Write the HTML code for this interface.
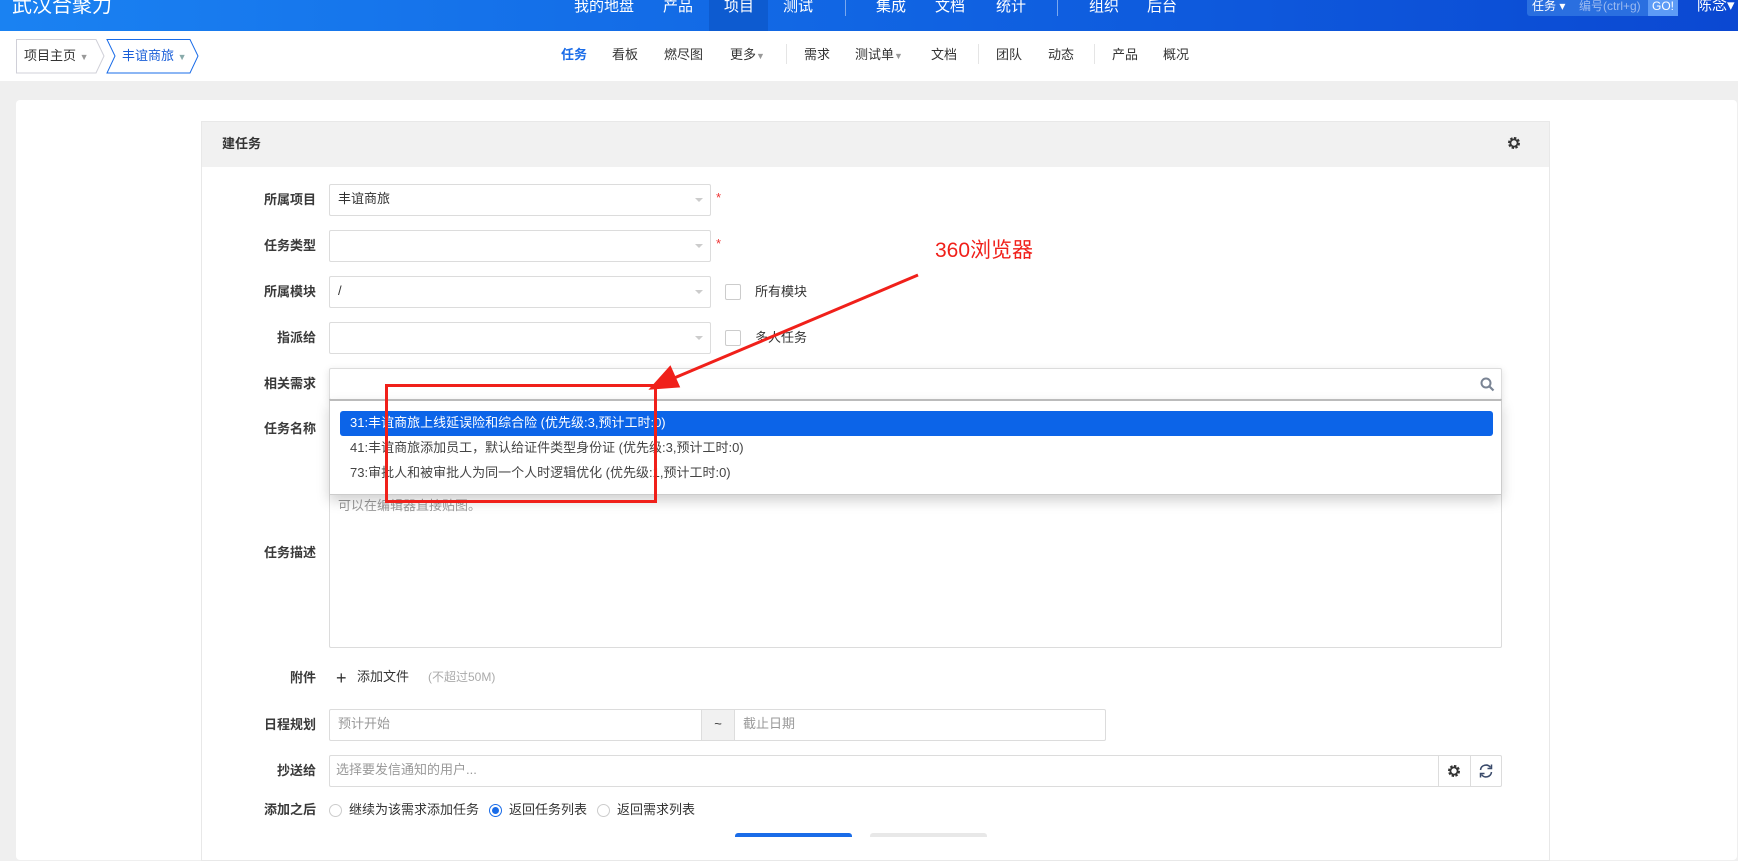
<!DOCTYPE html>
<html><head><meta charset="utf-8">
<style>
*{margin:0;padding:0;box-sizing:border-box}
body{width:1738px;height:835px;overflow:hidden;background:#efefef;font-family:"Liberation Sans","Noto Sans CJK SC",sans-serif;font-size:13px;color:#333;position:relative}
.a{position:absolute;white-space:nowrap;line-height:18px}
#hd{position:absolute;left:0;top:0;width:1738px;height:31px;background:linear-gradient(90deg,#1a82f2,#0f5fe0 60%,#0b48d2)}
#hd .n{position:absolute;top:-3px;color:#fff;font-size:15px;line-height:20px}
#sub{position:absolute;left:0;top:31px;width:1738px;height:50px;background:#fff}
.sn{position:absolute;top:15px;font-size:13px;color:#333;line-height:18px}
.sep{position:absolute;top:13px;width:1px;height:20px;background:#e5e5e5}
.lbl{position:absolute;right:1422px;font-size:13px;font-weight:bold;color:#3a3a3a;line-height:18px;text-align:right}
.inp{position:absolute;background:#fff;border:1px solid #dcdcdc;border-radius:2px}
.inp>.a{top:5px}
.car{position:absolute;right:7px;top:13px;border:4px solid transparent;border-top-color:#ccc;border-bottom:0}
.star{position:absolute;color:#e33;font-size:13px}
.cb{position:absolute;width:16px;height:16px;border:1px solid #ccc;border-radius:2px;background:#fff}
.rd{position:absolute;width:13px;height:13px;border:1px solid #ccc;border-radius:50%;background:#fff}
</style></head><body>
<div id="hd">
 <div class="n" style="left:12px;top:-6px;font-size:20px;line-height:24px">武汉合聚力</div>
 <div class="n" style="left:574px">我的地盘</div>
 <div class="n" style="left:663px">产品</div>
 <div style="position:absolute;left:709px;top:0;width:59px;height:31px;background:#0d5bd0"></div>
 <div class="n" style="left:724px">项目</div>
 <div class="n" style="left:783px">测试</div>
 <div style="position:absolute;left:845px;top:0;width:1px;height:16px;background:#7aa8ee"></div>
 <div class="n" style="left:876px">集成</div>
 <div class="n" style="left:935px">文档</div>
 <div class="n" style="left:996px">统计</div>
 <div style="position:absolute;left:1057px;top:0;width:1px;height:16px;background:#7aa8ee"></div>
 <div class="n" style="left:1089px">组织</div>
 <div class="n" style="left:1147px">后台</div>
 <div style="position:absolute;left:1527px;top:0;width:151px;height:16px;background:#2a6fe0;border-radius:0 0 3px 3px"></div>
 <div style="position:absolute;left:1648px;top:0;width:30px;height:16px;background:#5d9bf6"></div>
 <div class="n" style="left:1532px;font-size:12px;top:-4px">任务 ▾</div>
 <div class="n" style="left:1579px;font-size:12px;top:-4px;color:#9bbaf0">编号(ctrl+g)</div>
 <div class="n" style="left:1652px;font-size:12px;top:-4px">GO!</div>
 <div class="n" style="left:1697px;top:-4px">陈念▾</div>
</div>
<div id="sub">
 <svg style="position:absolute;left:16px;top:8px" width="190" height="35">
  <path d="M0.5 0.5 H80 L88 17 L80 34 H0.5Z" fill="#fff" stroke="#d0d0d8"/>
  <path d="M91 0.5 H174 L182 17 L174 34 H91 L99 17Z" fill="#fff" stroke="#1a6ce8"/>
 </svg>
 <div class="a" style="left:24px;top:16px;font-size:13px">项目主页 <span style="color:#999;font-size:9px">▼</span></div>
 <div class="a" style="left:122px;top:16px;font-size:13px;color:#1a5fd8">丰谊商旅 <span style="color:#8aa;font-size:9px">▼</span></div>
 <div class="sn" style="left:561px;color:#1a6ce8;font-weight:bold">任务</div>
 <div class="sn" style="left:612px">看板</div>
 <div class="sn" style="left:664px">燃尽图</div>
 <div class="sn" style="left:730px">更多<span style="color:#999;font-size:9px">▼</span></div>
 <div class="sep" style="left:786px"></div>
 <div class="sn" style="left:804px">需求</div>
 <div class="sn" style="left:855px">测试单<span style="color:#999;font-size:9px">▼</span></div>
 <div class="sn" style="left:931px">文档</div>
 <div class="sep" style="left:978px"></div>
 <div class="sn" style="left:996px">团队</div>
 <div class="sn" style="left:1048px">动态</div>
 <div class="sep" style="left:1094px"></div>
 <div class="sn" style="left:1112px">产品</div>
 <div class="sn" style="left:1163px">概况</div>
</div>
<div style="position:absolute;left:16px;top:100px;width:1721px;height:760px;background:#fff;border-radius:4px"></div>
<div style="position:absolute;left:201px;top:121px;width:1349px;height:740px;border:1px solid #e8e8e8;background:#fff"></div>
<div style="position:absolute;left:202px;top:122px;width:1347px;height:45px;background:#f1f1f1"></div>
<div class="a" style="left:222px;top:135px;font-weight:bold;font-size:13px">建任务</div>
<svg style="position:absolute;left:1507px;top:136px" width="14" height="14" viewBox="0 0 14 14"><circle cx="7" cy="7" r="4.5" fill="none" stroke="#333" stroke-width="3" stroke-dasharray="2.2 1.3"/><circle cx="7" cy="7" r="3.6" fill="none" stroke="#333" stroke-width="1.8"/></svg>

<div class="lbl" style="top:191px">所属项目</div>
<div class="inp" style="left:329px;top:184px;width:382px;height:32px"><span class="a" style="left:8px">丰谊商旅</span><div class="car"></div></div>
<div class="star" style="left:716px;top:190px">*</div>
<div class="lbl" style="top:237px">任务类型</div>
<div class="inp" style="left:329px;top:230px;width:382px;height:32px"><div class="car"></div></div>
<div class="star" style="left:716px;top:236px">*</div>
<div class="lbl" style="top:283px">所属模块</div>
<div class="inp" style="left:329px;top:276px;width:382px;height:32px"><span class="a" style="left:8px">/</span><div class="car"></div></div>
<div class="cb" style="left:725px;top:284px"></div><div class="a" style="left:755px;top:283px">所有模块</div>
<div class="lbl" style="top:329px">指派给</div>
<div class="inp" style="left:329px;top:322px;width:382px;height:32px"><div class="car"></div></div>
<div class="cb" style="left:725px;top:330px"></div><div class="a" style="left:755px;top:329px">多人任务</div>
<div class="lbl" style="top:375px">相关需求</div>
<div class="lbl" style="top:420px">任务名称</div>
<div class="lbl" style="top:544px">任务描述</div>
<div class="inp" style="left:329px;top:488px;width:1173px;height:160px"><span class="a" style="left:8px;top:8px;color:#999">可以在编辑器直接贴图。</span></div>
<div class="inp" style="left:329px;top:368px;width:1173px;height:32px;box-shadow:0 2px 8px rgba(0,0,0,.12)">
 <svg style="position:absolute;right:6px;top:8px" width="15" height="15" viewBox="0 0 15 15"><circle cx="6" cy="6" r="4.5" fill="none" stroke="#7a8494" stroke-width="2"/><path d="M9.5 9.5 L13.5 13.5" stroke="#7a8494" stroke-width="2.2"/></svg>
</div>
<div style="position:absolute;left:329px;top:399px;width:1173px;height:96px;background:#fff;border:1px solid #ccc;border-top:2px solid #bbb;box-shadow:0 6px 12px rgba(0,0,0,.18)">
 <div style="position:absolute;left:10px;top:10px;width:1153px;height:25px;background:#0c64e8;border-radius:3px"></div>
 <div class="a" style="left:20px;top:13px;color:#fff">31:丰谊商旅上线延误险和综合险 (优先级:3,预计工时:0)</div>
 <div class="a" style="left:20px;top:38px;color:#444">41:丰谊商旅添加员工，默认给证件类型身份证 (优先级:3,预计工时:0)</div>
 <div class="a" style="left:20px;top:63px;color:#444">73:审批人和被审批人为同一个人时逻辑优化 (优先级:1,预计工时:0)</div>
</div>
<div style="position:absolute;left:385px;top:384px;width:272px;height:119px;border:3px solid #f0201a"></div>
<svg style="position:absolute;left:0;top:0" width="1738" height="835"><path d="M918 275 L660 384" stroke="#f0201a" stroke-width="3"/><path d="M652 388 L670 368 L678 386Z" fill="#f0201a" stroke="#f0201a" stroke-width="3"/></svg>
<div class="a" style="left:935px;top:239px;color:#f0201a;font-size:21px;line-height:24px">360浏览器</div>

<div class="lbl" style="top:669px">附件</div>
<div class="a" style="left:336px;top:667px;font-size:18px;color:#333;line-height:22px">+</div>
<div class="a" style="left:357px;top:668px">添加文件</div>
<div class="a" style="left:428px;top:668px;color:#aaa;font-size:12px">(不超过50M)</div>
<div class="lbl" style="top:716px">日程规划</div>
<div class="inp" style="left:329px;top:709px;width:777px;height:32px"><span class="a" style="left:8px;color:#999">预计开始</span>
 <div style="position:absolute;left:371px;top:0;width:34px;height:30px;background:#f1f1f1;border-left:1px solid #ddd;border-right:1px solid #ddd;text-align:center;line-height:28px">~</div>
 <span class="a" style="left:413px;color:#999">截止日期</span></div>
<div class="lbl" style="top:762px">抄送给</div>
<div class="inp" style="left:329px;top:755px;width:1173px;height:32px"><span class="a" style="left:6px;color:#999">选择要发信通知的用户...</span>
 <div style="position:absolute;left:1108px;top:0;width:1px;height:30px;background:#ddd"></div>
 <div style="position:absolute;left:1140px;top:0;width:1px;height:30px;background:#ddd"></div>
 <svg style="position:absolute;left:1117px;top:8px" width="14" height="14" viewBox="0 0 14 14"><circle cx="7" cy="7" r="4.5" fill="none" stroke="#333" stroke-width="3" stroke-dasharray="2.2 1.3"/><circle cx="7" cy="7" r="3.6" fill="none" stroke="#333" stroke-width="1.8"/></svg>
 <svg style="position:absolute;left:1148px;top:7px" width="16" height="16" viewBox="0 0 16 16"><path d="M2.5 7 A5.5 5.5 0 0 1 12.5 4.5" fill="none" stroke="#3a4a6a" stroke-width="1.5"/><path d="M13.5 1.5 V5.5 H9.5" fill="none" stroke="#3a4a6a" stroke-width="1.5"/><path d="M13.5 9 A5.5 5.5 0 0 1 3.5 11.5" fill="none" stroke="#3a4a6a" stroke-width="1.5"/><path d="M2.5 14.5 V10.5 H6.5" fill="none" stroke="#3a4a6a" stroke-width="1.5"/></svg>
</div>
<div class="lbl" style="top:801px">添加之后</div>
<div class="rd" style="left:329px;top:804px"></div><div class="a" style="left:349px;top:801px;color:#333">继续为该需求添加任务</div>
<div class="rd" style="left:489px;top:804px;border-color:#1a6ce8"><div style="position:absolute;left:2px;top:2px;width:7px;height:7px;border-radius:50%;background:#1a6ce8"></div></div><div class="a" style="left:509px;top:801px">返回任务列表</div>
<div class="rd" style="left:597px;top:804px"></div><div class="a" style="left:617px;top:801px">返回需求列表</div>
<div style="position:absolute;left:735px;top:833px;width:117px;height:4px;background:#1a6ce8;border-radius:3px 3px 0 0"></div>
<div style="position:absolute;left:870px;top:833px;width:117px;height:4px;background:#e8e8e8;border-radius:3px 3px 0 0"></div>
</body></html>
